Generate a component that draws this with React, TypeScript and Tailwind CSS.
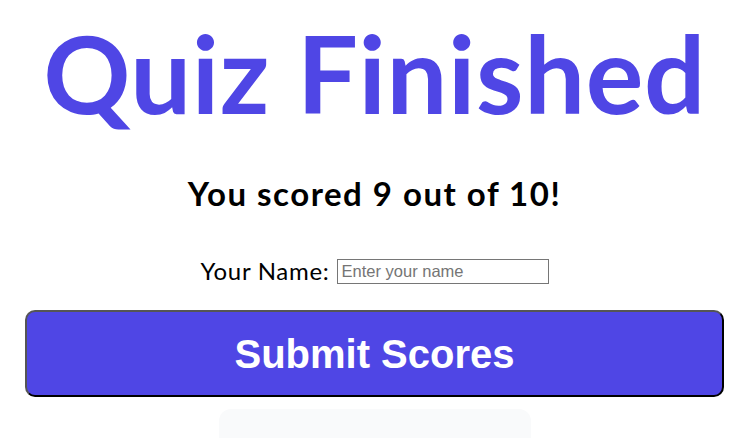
import React from "react";

const comic = { fontFamily: '"Comic Sans MS", Lato, sans-serif' };

export default function App() {
  return (
    <div className="min-h-screen bg-white flex flex-col items-center px-[25px]" style={comic}>
      <h1 className="mt-[10px] text-[108px] leading-[124px] font-bold text-[#4f46e5] tracking-[0.6px]">Quiz Finished</h1>
      <h2 className="mt-[39px] text-[33px] leading-[40px] font-bold text-black tracking-[1.5px]">You scored 9 out of 10!</h2>
      <div className="mt-[43px] flex items-center gap-[7px]">
        <label className="text-[24px] leading-[30px] text-black tracking-[0.7px]">Your Name:</label>
        <input
          type="text"
          placeholder="Enter your name"
          className="w-[212px] h-[25px] border border-[#767676] px-[4px] text-[16.5px] text-black placeholder:text-[#757575] outline-none"
          style={{ fontFamily: '"Liberation Sans", Arial, sans-serif' }}
        />
      </div>
      <button
        className="mt-[24px] w-full h-[87px] rounded-[10px] border-2 border-[#555] border-r-black border-b-black bg-[#4f46e5] text-white text-[40px] font-bold"
        style={{ fontFamily: '"Liberation Sans", Arial, sans-serif' }}
      >
        Submit Scores
      </button>
      <div className="mt-[12px] w-[312px] h-[60px] rounded-[12px] bg-[#f9fafb]" />
    </div>
  );
}
